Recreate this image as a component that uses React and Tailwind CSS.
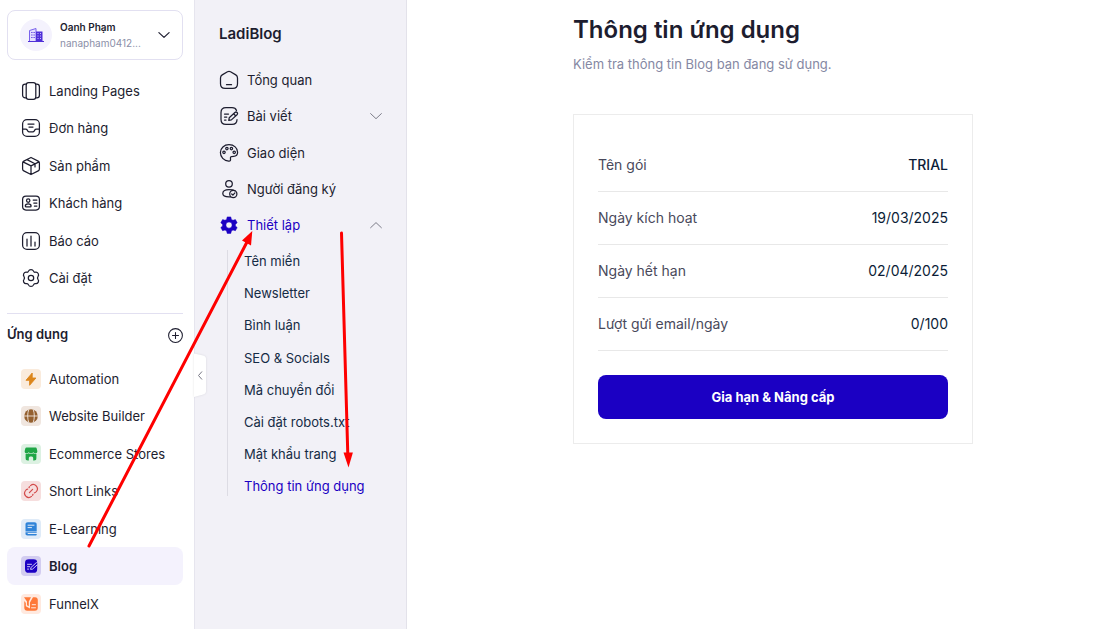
import React from 'react';

const S = ({ children, className = 'size-5', sw = 1.25 }) => (
  <svg
    viewBox="0 0 20 20"
    fill="none"
    stroke="currentColor"
    strokeWidth={sw}
    strokeLinecap="round"
    strokeLinejoin="round"
    className={`shrink-0 ${className}`}
  >
    {children}
  </svg>
);

const PagesIcon = () => (
  <S>
    <rect x="5.2" y="1.6" width="9.6" height="16.8" rx="2.4" />
    <path d="M5 3.2H4.2A2.6 2.6 0 0 0 1.6 5.8v8.4a2.6 2.6 0 0 0 2.6 2.6H5M15 3.2h.8a2.6 2.6 0 0 1 2.6 2.6v8.4a2.6 2.6 0 0 1-2.6 2.6H15" />
  </S>
);
const InboxIcon = () => (
  <S>
    <rect x="1.6" y="1.6" width="16.8" height="16.8" rx="4.4" />
    <path d="M1.8 11h2.8c.8 0 1.3.4 1.7 1.1l.4.8c.4.7.9 1 1.6 1h3.4c.7 0 1.2-.3 1.6-1l.4-.8c.4-.7.9-1.1 1.7-1.1h2.8M7 6h6M8 9h4" />
  </S>
);
const BoxIcon = () => (
  <S>
    <path d="M10 1.5l7.2 3.6c.8.4 1.2 1 1.2 1.9v6c0 .9-.4 1.5-1.2 1.9L10 18.5l-7.2-3.6c-.8-.4-1.2-1-1.2-1.9V7c0-.9.4-1.5 1.2-1.9zM2 5.9l8 4 8-4M10 9.9v8.4M6 3.6l8 4.1v3.2" />
  </S>
);
const CustomerIcon = () => (
  <S>
    <rect x="1.6" y="3" width="16.8" height="14" rx="3.4" />
    <circle cx="7.2" cy="7.6" r="1.7" />
    <path d="M4.3 13c0-1.5 1.2-2.2 2.9-2.2s2.9.7 2.9 2.2c0 .7-.4.9-1 .9H5.3c-.6 0-1-.2-1-.9zM12.2 7h3.7M12.8 10h3.1M13.4 13h2.5" />
  </S>
);
const ReportIcon = () => (
  <S>
    <rect x="1.6" y="1.6" width="16.8" height="16.8" rx="4.4" />
    <path d="M6 8v7M10 5v10M14 11v4" />
  </S>
);
const GearIcon = () => (
  <S>
    <path d="M7.5 3.1C8.3 1 11.7 1 12.5 3.1c.3.8 1.2 1.3 2 1.1 2.3-.4 4 2.5 2.5 4.3-.6.8-.6 2 0 2.9 1.5 1.8-.2 4.7-2.5 4.3-.8-.2-1.7.4-2 1.2-.8 2.1-4.2 2.1-5 0-.3-.8-1.2-1.4-2-1.2-2.3.4-4-2.5-2.5-4.3.6-.9.6-2.1 0-2.900C1.500 6.700 3.200 3.800 5.500 4.200c.8.200 1.700-.3 2-1.100z" />
    <circle cx="10" cy="10" r="2.7" />
  </S>
);
const HomeIcon = () => (
  <S>
    <path d="M8.5 1.8a3 3 0 0 1 3 0l5.3 3.1c1.1.7 1.7 1.700 1.700 3v5.800c0 2.900-1.700 4.700-4.600 4.700H6.100c-2.900 0-4.600-1.800-4.600-4.700V7.900c0-1.300.6-2.300 1.700-3z" />
    <path d="M7.5 14.700h5" />
  </S>
);
const EditIcon = () => (
  <S>
    <path d="M17.5 4.500c-.7-2-2.200-2.900-4.500-2.900H7C3.500 1.600 2 3.200 2 6.500v7c0 3.300 1.500 4.900 5 4.900h6c3.400 0 4.900-1.500 5-4.700M5.500 8h4M5.500 11h2.300M5.500 14h1.500" />
    <path d="M9.800 14.300l.4-2.500 5.700-5.300c.9-.8 1.600-.6 2.200 0s.7 1.400-.1 2.200l-5.600 5.200zM14.600 7.800l2 2" />
  </S>
);
const PaletteIcon = () => (
  <S>
    <path d="M10 1.700c5 0 8.600 3.300 8.600 7.600 0 2.700-1.700 4-4 4-2.500 0-3.500.4-3.100 2.600.3 1.500-.3 2.500-1.800 2.300C4.800 17.600 1.400 14 1.400 9.600 1.400 5 5.200 1.700 10 1.700z" />
    <circle cx="7.9" cy="5.6" r="1.2" />
    <circle cx="12.4" cy="5.6" r="1.2" />
    <circle cx="5" cy="9.3" r="1.2" />
    <circle cx="15.2" cy="9.3" r="1.2" />
  </S>
);
const SubscriberIcon = () => (
  <S>
    <circle cx="10" cy="4.8" r="3.3" />
    <path d="M16 11.700c-1.500-.8-3.500-1.100-6-1.100-4.200 0-6.200 1.500-6.200 3.900 0 2.700 1.700 3.400 6.200 3.400h1.500" />
    <circle cx="14.3" cy="14.9" r="3.6" />
    <path d="M12.7 15l1.200 1.100 2-2.200" />
  </S>
);
const SolidGearIcon = () => (
  <svg viewBox="0 0 20 20" className="size-5 shrink-0" fill="#1b00c3" fillRule="evenodd">
    <path d="M8.200 1.900h3.600l.6 2.500 1.600.9 2.400-.7 1.800 3.100-1.800 1.700v1.500l1.800 1.700-1.800 3.100-2.400-.7-1.600.9-.6 2.500H8.200l-.6-2.500-1.600-.9-2.400.7-1.800-3.100 1.800-1.700V9.400L1.800 7.700l1.800-3.100 2.400.7 1.600-.9zM10 7a3.100 3.100 0 1 0 0 6.200A3.100 3.100 0 0 0 10 7z" stroke="#1b00c3" strokeWidth=".5" strokeLinejoin="round" />
  </svg>
);

const Tile = ({ bg, children }) => (
  <svg viewBox="0 0 20 20" className="size-5 shrink-0" fill="none">
    <rect width="20" height="20" rx="4" fill={bg} />
    {children}
  </svg>
);

const BoltTile = () => (
  <Tile bg="#faebdc">
    <path d="M11.200 4v5h3.700L8.600 16.300v-5H5z" fill="#dc861c" stroke="#dc861c" strokeWidth=".9" strokeLinejoin="round" />
  </Tile>
);
const GlobeTile = () => (
  <Tile bg="#f0e6df">
    <circle cx="10" cy="10" r="6.8" fill="#94602f" />
    <path d="M3 10h14M7.800 3.500c-1.500 4-1.500 9 0 13M12.200 3.500c1.500 4 1.500 9 0 13" stroke="#f0e6df" strokeWidth=".9" />
  </Tile>
);
const StoreTile = () => (
  <Tile bg="#dcf1e2">
    <path d="M5.500 3.500h9c.7 0 1 .4 1.200 1l.6 2.600c.3 1.500-.7 2.300-1.900 2.300-.9 0-1.600-.4-2.100-1.100-.5.700-1.300 1.100-2.300 1.100S8.200 9 7.700 8.300C7.200 9 6.500 9.400 5.600 9.400c-1.200 0-2.200-.8-1.900-2.300l.6-2.600c.2-.6.5-1 1.200-1z" fill="#1fa646" />
    <path d="M4.600 9.900c1.200.2 2.300-.1 3.100-.7 1.300.9 3.300.9 4.600 0 .8.600 1.900.9 3.100.7V14c0 1.800-.7 2.500-2.400 2.500h-.8V14.300c0-1-.6-1.700-2.200-1.700s-2.200.7-2.200 1.700v2.200H7c-1.700 0-2.400-.7-2.400-2.500z" fill="#1fa646" />
  </Tile>
);
const LinkTile = () => (
  <Tile bg="#f6dede">
    <g stroke="#d34b4b" strokeWidth="1.200" strokeLinecap="round">
      <path d="M6.600 8.200c-1 .1-1.600.7-2 1.300a4.300 4.300 0 0 0 .3 5.700 4.200 4.200 0 0 0 5.600.2" />
      <path d="M13.400 11.800c1-.1 1.600-.7 2-1.300a4.300 4.300 0 0 0-.3-5.700 4.200 4.200 0 0 0-5.600-.2" />
      <path d="M8.400 11.600l3.200-3.200M12 13.300l-.4 1M8 6.700l.4-1" />
    </g>
  </Tile>
);
const BookTile = () => (
  <Tile bg="#dfebf8">
    <path d="M4.500 5.500C4.500 4 5.300 3.200 6.800 3.200h6.600c1.500 0 2.300.8 2.300 2.300v6.900H4.500zM4.500 13.200h11.200v.9h-9v.8h9v.8c0 .5-.3.800-.8.800H6.500c-1.300 0-2-.7-2-1.700z" fill="#2f83d8" />
    <path d="M7 6.200h6M7 8.600h3.500" stroke="#dfebf8" strokeWidth="1" strokeLinecap="round" />
  </Tile>
);
const BlogTile = () => (
  <Tile bg="#d2ccf0">
    <path d="M8 3.200h4.500c2.700 0 3.700 1.100 3.700 3.700v6c0 2.600-1.100 3.900-3.700 3.900H7.900c-2.700 0-3.900-1.200-3.900-3.900v-6c0-2.600 1.300-3.700 4-3.700z" fill="#1b00c3" />
    <path d="M9.600 13.400l.3-1.800 5-4.600c.5-.5 1.200-.5 1.600 0 .5.500.5 1.100 0 1.600l-4.900 4.500z" fill="#1b00c3" stroke="#ded9f6" strokeWidth=".9" strokeLinejoin="round" />
    <path d="M6.500 8.300h4M6.500 10.700h2.200M6.500 13.100h1.200" stroke="#ded9f6" strokeWidth=".9" strokeLinecap="round" />
  </Tile>
);
const FunnelTile = () => (
  <Tile bg="#ffe9df">
    <path d="M3 3.200h7L7.800 7.500v4.800L6 11.200V7.600z" fill="#fe7838" />
    <path d="M12 3.200h2c1.900 0 2.800 1 2.800 2.900v7.600c0 2-1 3-3 3H6.300c-2 0-3-1-3-3V7l1.500 2v3.200l4.200 2.300V8.500z" fill="#fe7838" />
    <path d="M11.200 10.700h3.300M10.500 13.800h4" stroke="#ffe9df" strokeWidth="1" strokeLinecap="round" />
  </Tile>
);

const mainNav = [
  ['Landing Pages', PagesIcon],
  ['Đơn hàng', InboxIcon],
  ['Sản phẩm', BoxIcon],
  ['Khách hàng', CustomerIcon],
  ['Báo cáo', ReportIcon],
  ['Cài đặt', GearIcon],
];
const apps = [
  ['Automation', BoltTile],
  ['Website Builder', GlobeTile],
  ['Ecommerce Stores', StoreTile],
  ['Short Links', LinkTile],
  ['E-Learning', BookTile],
  ['Blog', BlogTile],
  ['FunnelX', FunnelTile],
];
const blogNav = [
  ['Tổng quan', HomeIcon, null],
  ['Bài viết', EditIcon, 'down'],
  ['Giao diện', PaletteIcon, null],
  ['Người đăng ký', SubscriberIcon, null],
  ['Thiết lập', SolidGearIcon, 'up'],
];
const settings = ['Tên miền', 'Newsletter', 'Bình luận', 'SEO & Socials', 'Mã chuyển đổi', 'Cài đặt robots.txt', 'Mật khẩu trang', 'Thông tin ứng dụng'];
const info = [
  ['Tên gói', 'TRIAL'],
  ['Ngày kích hoạt', '19/03/2025'],
  ['Ngày hết hạn', '02/04/2025'],
  ['Lượt gửi email/ngày', '0/100'],
];

function NavRow({ label, Icon, active, labelClass = 'pt-[1.2px]' }) {
  return (
    <li className={`flex h-[37.5px] items-center gap-2 rounded-lg pl-3.5 ${active ? 'bg-[#f4f2fd] font-semibold' : ''}`}>
      <Icon />
      <span className={labelClass}>{label}</span>
    </li>
  );
}

function Account() {
  return (
    <div className="flex h-[50px] shrink-0 items-center rounded-lg border border-[#e2e0f1] px-3">
      <div className="flex size-8 items-center justify-center rounded-full bg-[#f4f2fd]">
        <svg viewBox="0 0 16 16" className="size-4" fill="none">
          <path d="M1.500 14V3.500L8 1.500V14" fill="#e4dfff" stroke="#7a62ec" strokeWidth="1" />
          <path d="M8 4.500h6.500V14H8z" fill="#4f2fd8" />
          <path d="M3.200 5.500h1.300M5.500 5.500h1.300M3.200 8h1.300M5.500 8h1.300M3.200 10.500h1.300M5.500 10.500h1.300" stroke="#5a3ce0" strokeWidth="1.200" />
          <path d="M9.500 6.500h1M12 6.500h1M9.500 9h1M12 9h1M9.500 11.500h1M12 11.500h1" stroke="#c9bfff" strokeWidth="1" />
          <path d="M0 14.500h16" stroke="#4f2fd8" strokeWidth="1" />
        </svg>
      </div>
      <div className="ml-2 flex flex-col">
        <span className="text-[10px] font-semibold leading-4">Oanh Phạm</span>
        <span className="text-[10px] leading-4 text-[#8b8fa8]">nanapham0412...</span>
      </div>
      <S className="ml-auto size-3" sw={2}>
        <path d="M1.500 6l8.500 8 8.500-8" />
      </S>
    </div>
  );
}

function Arrows() {
  return (
    <svg className="pointer-events-none absolute left-0 top-0 z-20 h-[629px] w-[407px]" viewBox="0 0 407 629" fill="#fe0000" stroke="#fe0000">
      <path d="M89 546L247 242" strokeWidth="3" strokeLinecap="round" fill="none" />
      <path d="M252.300 231l-10.300 9.500 9 5z" stroke="none" />
      <path d="M341.500 233l6.300 221" strokeWidth="3" strokeLinecap="round" fill="none" />
      <path d="M348.500 467.500l-5-15h9.400z" stroke="none" />
    </svg>
  );
}

export default function App() {
  return (
    <div className="relative flex h-[629px] w-[1117px] overflow-hidden bg-white font-['Inter',sans-serif] text-[13px] text-[#1d1d2f]">
      <aside className="flex w-[195px] shrink-0 flex-col border-r border-[#e6e5ee] pl-[7px] pr-[11px] pt-2.5">
        <Account />
        <ul className="mt-3">
          {mainNav.map(([label, Icon]) => (
            <NavRow key={label} label={label} Icon={Icon} />
          ))}
        </ul>
        <div className="mt-4 border-t border-[#e2e0f1]" />
        <div className="mt-[11px] flex h-5 items-center justify-between">
          <h2 className="text-[13px] font-semibold">Ứng dụng</h2>
          <S className="mt-px size-[15px]" sw={1.4}>
            <circle cx="10" cy="10" r="9.2" />
            <path d="M10 6v8M6 10h8" />
          </S>
        </div>
        <ul className="mt-[14.75px]">
          {apps.map(([label, Icon]) => (
            <NavRow key={label} label={label} Icon={Icon} active={label === 'Blog'} labelClass="pt-[1.7px]" />
          ))}
        </ul>
      </aside>

      <nav className="relative flex w-[212px] shrink-0 flex-col border-r border-[#e3e2ea] bg-[#f2f1f7] px-6 pt-[22px]">
        <svg className="absolute -left-px top-[351px] h-12 w-[14px] drop-shadow-[0_0_1px_rgba(0,0,0,0.1)]" viewBox="0 0 14 48" fill="none">
          <path d="M0 2.500l9 2c2 .5 3 1.600 3 3.500V40c0 1.900-1 3-3 3.600L0 46z" fill="#fff" />
          <path d="M8 20.500L4.500 24.500 8 28.500" stroke="#777784" strokeWidth="1" />
        </svg>
        <h1 className="text-[15px] font-semibold leading-6">LadiBlog</h1>
        <ul className="mt-4">
          {blogNav.map(([label, Icon, chev]) => (
            <li key={label} className={`flex h-[36.25px] items-center gap-2 ${chev === 'up' ? 'text-[#1b00c3]' : ''}`}>
              <Icon />
              <span className="pt-[1.7px]">{label}</span>
              {chev && (
                <S className="ml-auto size-3 text-[#777784]" sw={1.6}>
                  <path d={chev === 'down' ? 'M1 6l9 8.5L19 6' : 'M1 14.5L10 6l9 8.5'} />
                </S>
              )}
            </li>
          ))}
        </ul>
        <ul className="ml-2 mt-[7px] h-[246px] border-l border-[#dddce4] pl-4 pt-[0.87px] text-[#152b45]">
          {settings.map((label, i) => (
            <li key={label} className={`flex h-[32.15px] items-start whitespace-nowrap leading-5 ${i === 7 ? 'text-[#1b00c3]' : ''}`}>
              {label}
            </li>
          ))}
        </ul>
      </nav>

      <main className="flex-1 pl-[166px] pt-3">
        <h2 className="text-2xl font-semibold leading-9">Thông tin ứng dụng</h2>
        <p className="mt-1.5 leading-5 text-[#8588a3]">Kiểm tra thông tin Blog bạn đang sử dụng.</p>
        <section className="mt-10 flex h-[330px] w-[400px] flex-col border border-[#ececec] px-6 pt-6 text-sm">
          <dl>
            {info.map(([k, v], i) => (
              <div key={k} className="flex h-[53px] items-center justify-between border-b border-[#e8e8e8]">
                <dt className="text-[#49495b]">{k}</dt>
                <dd className={`text-[#0c1d37] ${i === 0 ? 'font-medium' : ''}`}>{v}</dd>
              </div>
            ))}
          </dl>
          <button className="mt-6 h-11 rounded-lg bg-[#1b00c3] text-[13px] font-bold text-white">Gia hạn &amp; Nâng cấp</button>
        </section>
      </main>
      <Arrows />
    </div>
  );
}
